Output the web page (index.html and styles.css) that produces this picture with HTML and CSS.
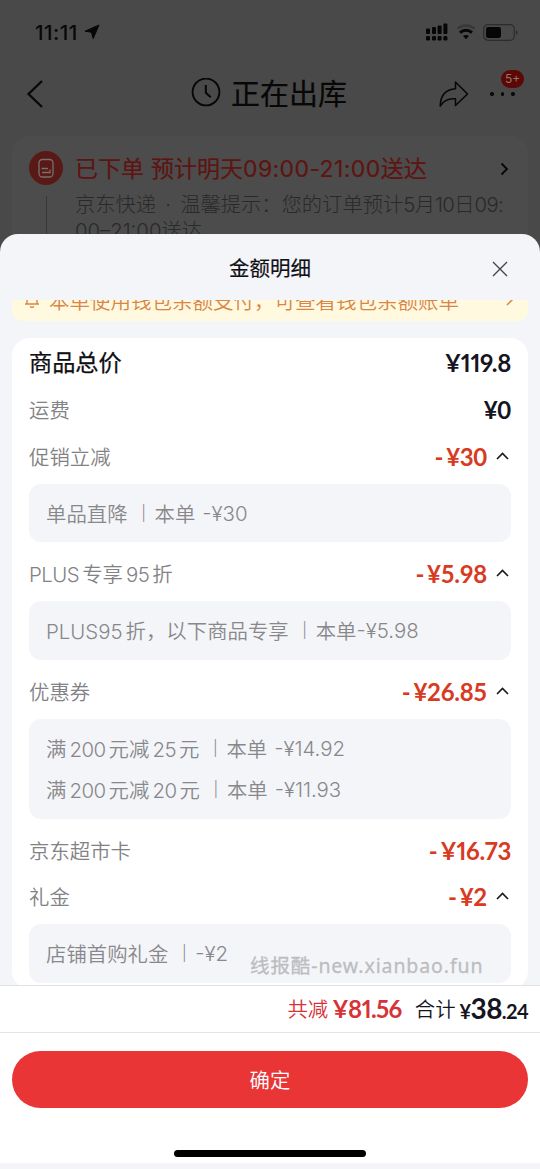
FILE: index.html
```html
<!DOCTYPE html>
<html lang="zh-CN">
<head>
<meta charset="utf-8">
<title>金额明细</title>
<link rel="stylesheet" href="styles.css">
</head>
<body>
<div class="phone">
  <div class="page">
    <div class="status">
      <span class="clock">11:11</span>
      <svg class="loc" width="16" height="16" viewBox="0 0 16 16"><path d="M15 1 1 7.2 7.4 8.2 9.2 14.6Z" fill="#070707" stroke="#070707" stroke-linejoin="round"/></svg>
      <svg class="signal" width="24" height="18" viewBox="0 0 24 18" fill="#070707"><rect x="1" y="5.5" width="4" height="5.5" rx="1"/><rect x="7" y="4" width="4" height="7" rx="1"/><rect x="12.6" y="2.5" width="4" height="8.5" rx="1"/><rect x="18.4" y="0.5" width="4" height="10.5" rx="1"/><rect x="1" y="13" width="4" height="4.5" rx="1.3"/><rect x="7" y="13" width="4" height="4.5" rx="1.3"/><rect x="12.6" y="13" width="4" height="4.5" rx="1.3"/><rect x="18.4" y="13" width="4" height="4.5" rx="1.3"/></svg>
      <svg class="wifi" width="20" height="16" viewBox="0 0 20 16" fill="none"><path d="M1.5 4.6C6.5.4 13.5.4 18.5 4.6" stroke="#383838" stroke-width="2.6"/><path d="M4 8.6C7.4 5.5 12.6 5.5 16 8.6" stroke="#070707" stroke-width="3"/><path d="M7 12Q10 9.8 13 12L10 15.3Z" fill="#070707"/></svg>
      <svg class="battery" width="35" height="17" viewBox="0 0 35 17"><rect x=".7" y=".7" width="30.6" height="15.6" rx="4.3" fill="none" stroke="#2c2c2c" stroke-width="1.2"/><rect x="3" y="3" width="15" height="11" rx="2.3" fill="#060606"/><path d="M33 6V11Q34.5 10 34.5 8.5T33 6" fill="#2a2a2a"/></svg>
    </div>
    <div class="nav">
      <svg class="back" width="18" height="30" viewBox="0 0 18 30"><path d="M16 2 2.5 15 16 28" fill="none" stroke="#080808" stroke-width="2.3"/></svg>
      <svg class="time" width="30" height="30" viewBox="0 0 30 30" fill="none" stroke="#070707"><circle cx="15" cy="14" r="13.4" stroke-width="1.9"/><path d="M14.8 7V14.8L19.8 19.3" stroke-width="2"/></svg>
      <h1>正在出库</h1>
      <svg class="share" width="32" height="28" viewBox="0 0 32 28"><path d="M17.5 2 29.5 14 17.5 25.5V18.8C10 18 5.5 20.5 2.2 26 2.5 15 8 9.5 17.5 8.8Z" fill="none" stroke="#070707" stroke-width="1.5" stroke-linejoin="round"/></svg>
      <div class="more"><i></i><i></i><i></i><b>5+</b></div>
    </div>
    <div class="order">
      <div class="rail">
        <svg width="34" height="34" viewBox="0 0 34 34"><circle cx="17" cy="17" r="17" fill="#591917"/><rect x="10" y="8.5" width="14" height="17.5" rx="3.5" fill="none" stroke="#77706f" stroke-width="1.3"/><path d="M12.5 17.5H19M13 21.5H21V18.5" fill="none" stroke="#77706f" stroke-width="1.3"/></svg>
        <span></span>
      </div>
      <div class="info">
        <div class="state"><span>已下单</span><span>预计明天<em>09:00-21:00</em>送达</span>
          <svg width="9" height="14" viewBox="0 0 9 14"><path d="M1.5 1.5 7 7 1.5 12.5" fill="none" stroke="#060606" stroke-width="1.8"/></svg></div>
        <p><span class="carrier">京东快递</span><span class="dot">·</span><span>温馨提示：您的订单预计<em>5</em>月<em>10</em>日<em>09:</em></span></p>
        <p>00–21:00送达</p>
      </div>
    </div>
  </div>

  <section class="sheet">
    <header><h2>金额明细</h2>
      <svg class="close" width="16" height="16" viewBox="0 0 16 16"><path d="M1 1 15 15M15 1 1 15" stroke="#464649" stroke-width="1.4"/></svg>
    </header>
    <div class="scroll">
      <div class="notice">
        <svg width="16" height="22" viewBox="0 0 16 22" fill="none" stroke="#d88545" stroke-width="1.4"><path d="M1 15H15M3 15V9Q3 4 8 4T13 9V15M6 17.5Q8 19 10 17.5"/></svg>
        <span>本单使用钱包余额支付，可查看钱包余额账单</span>
        <svg class="go" width="8" height="14" viewBox="0 0 8 14"><path d="M1 1 7 7 1 13" fill="none" stroke="#d88545" stroke-width="1.5"/></svg>
      </div>
      <div class="card">
        <div class="row total"><span>商品总价</span><b class="pn">¥119.8</b></div>
        <div class="row"><span>运费</span><b>¥0</b></div>
        <div class="row cut"><span>促销立减</span><b><i>-</i>¥30</b><svg class="up" viewBox="0 0 13 8"><path d="M1 7 6.5 1.5 12 7"/></svg></div>
        <div class="box"><p><span>单品直降</span><i class="bar">|</i><span>本单</span><em class="sp">-¥30</em></p></div>
        <div class="row cut"><span class="mix"><em>PLUS</em>专享<em>95</em>折</span><b><i>-</i>¥5.98</b><svg class="up" viewBox="0 0 13 8"><path d="M1 7 6.5 1.5 12 7"/></svg></div>
        <div class="box tall"><p><span class="mix wide"><em>PLUS95</em>折，以下商品专享</span><i class="bar">|</i><span>本单</span><em>-¥5.98</em></p></div>
        <div class="row cut"><span>优惠券</span><b><i>-</i>¥26.85</b><svg class="up" viewBox="0 0 13 8"><path d="M1 7 6.5 1.5 12 7"/></svg></div>
        <div class="box double">
          <p><span class="mix">满<em class="n">200</em>元减<em class="n">25</em>元</span><i class="bar">|</i><span>本单</span><em class="sp">-¥14.92</em></p>
          <p><span class="mix">满<em class="n">200</em>元减<em class="n">20</em>元</span><i class="bar">|</i><span>本单</span><em class="sp">-¥11.93</em></p>
        </div>
        <div class="row cut"><span>京东超市卡</span><b class="pn"><i>-</i>¥16.73</b></div>
        <div class="row cut last"><span>礼金</span><b><i>-</i>¥2</b><svg class="up" viewBox="0 0 13 8"><path d="M1 7 6.5 1.5 12 7"/></svg></div>
        <div class="box tall"><p><span>店铺首购礼金</span><i class="bar">|</i><em>-¥2</em></p></div>
      </div>
    </div>
    <div class="sum"><span class="off">共减</span><b class="off pn">¥81.56</b><span class="all">合计</span><b class="pay"><small>¥</small>38<small>.24</small></b></div>
    <div class="action"><button>确定</button><div class="home"></div></div>
    <div class="mark">线报酷-new.xianbao.fun</div>
  </section>
</div>
</body>
</html>
```
FILE: styles.css
```css
* { box-sizing: border-box; margin: 0; padding: 0; }
em, i { font-style: normal; }
svg { display: block; flex: none; }
body { font-family: "Inter", "Noto Sans CJK SC", sans-serif; }
.phone { position: relative; width: 540px; height: 1169px; overflow: hidden; background: #494949; }

.status { display: flex; align-items: center; height: 64px; padding: 0 22px 0 35px; }
.clock { font-size: 20.5px; font-weight: 550; color: #070707; letter-spacing: 0.5px; }
.loc { margin-left: 6px; }
.signal { margin-left: auto; }
.wifi { margin-left: 7px; }
.battery { margin-left: 7px; }

.nav { display: flex; align-items: center; height: 60px; padding: 0 24px 0 26px; }
.time { margin-left: 147px; margin-top: -2px; }
.nav h1 { margin-left: 10px; margin-top: -4px; font: 400 29px/40px "Noto Sans CJK SC", sans-serif; color: #070707; -webkit-text-stroke: 0.2px #070707; }
.share { margin-left: auto; }
.more { position: relative; display: flex; gap: 7px; width: 26px; margin-left: 20px; }
.more i { width: 3.5px; height: 3.5px; border-radius: 50%; background: #080808; }
.more b { position: absolute; left: 11px; top: -22px; width: 23px; height: 18px; border-radius: 9px; background: #5c0906; color: #8d7775; font-size: 12px; font-weight: 400; line-height: 18px; text-align: center; }

.order { display: flex; margin: 12px 12px 0; padding: 15px 0 0 17px; height: 150px; border-radius: 16px; background: #4c4c4c; }
.rail { width: 34px; }
.rail span { display: block; width: 1px; height: 60px; margin: 11px auto 0; background: #393939; }
.info { flex: 1; padding-left: 12px; }
.state { display: flex; align-items: center; height: 34px; gap: 7px; padding-top: 1px; font: 400 23px/34px "Inter", "Noto Sans CJK SC", sans-serif; color: #5e1411; -webkit-text-stroke: 0.2px #5e1411; white-space: nowrap; }
.state em { letter-spacing: 0.4px; }
.state svg { margin-left: auto; margin-right: 19px; }
.info p { display: flex; height: 26px; font-size: 20.3px; line-height: 26px; color: #292929; white-space: nowrap; font-weight: 300; }
.info p em { letter-spacing: -0.6px; }
.info .state + p { margin-top: 7px; }
.dot { width: 24px; text-align: center; }

.sheet { position: absolute; left: 0; top: 234px; width: 540px; height: 935px; display: flex; flex-direction: column; border-radius: 18px 18px 0 0; background: #f4f5f9; overflow: hidden; }
header { display: grid; grid-template-columns: 48px 1fr 48px; align-items: center; height: 66px; padding-top: 3px; }
h2 { grid-column: 2; margin-top: -3px; text-align: center; font: 400 20.5px/30px "Noto Sans CJK SC", sans-serif; color: #101014; -webkit-text-stroke: 0.2px #101014; }
.scroll { height: 685px; padding: 0 12px; overflow: hidden; }
.notice { display: flex; align-items: center; height: 42px; margin-top: -21px; padding: 0 14px 0 12px; border-radius: 10px; background: #fff9df; color: #d88545; font-size: 20.5px; }
.notice span { margin: -1px 0 0 9px; font-family: "Noto Sans CJK SC", sans-serif; font-weight: 350; line-height: 30px; }
.go { margin-left: auto; margin-top: -2px; }
.card { height: 651px; margin-top: 17px; padding: 2px 17px 0; border-radius: 18px; background: #fff; }
.row { display: flex; align-items: center; height: 47px; font-size: 20.4px; font-weight: 350; color: #828284; }
.row > span { margin-top: -2px; }
.row b { display: flex; margin-left: auto; font: 700 24px/30px "Lato", sans-serif; color: #15151f; letter-spacing: -0.3px; }
.row .pn, .sum .pn { font-variant-numeric: proportional-nums; }
.row b i { margin-right: 3px; }
.row.total { height: 46px; }
.row.total span { margin-top: -4px; font-size: 23.2px; font-weight: 400; color: #101014; -webkit-text-stroke: 0.25px #101014; }
.row.cut { height: 48px; }
.row.cut b { color: #d83a22; }
.row.cut.last { height: 46px; padding-bottom: 2px; }
.up { width: 13px; height: 8px; margin-left: 9px; margin-right: 2px; margin-top: -3px; fill: none; stroke: #18181c; stroke-width: 1.6; }
.box { height: 58px; margin: 3px 0 8px; padding: 8px 17px; border-radius: 12px; background: #f4f5f9; }
.box.tall { height: 59px; }
.box.double { height: 100px; }
.box p { display: flex; height: 41px; align-items: center; white-space: nowrap; font-size: 20.4px; font-weight: 350; color: #88888b; }
.bar { width: 20px; margin-left: 6px; text-align: center; font-size: 15px; margin-right: 1px; }
.box p > em { margin-top: 1px; }
.box .sp { margin-left: 7px; }
.mix em { margin: 0 3px; letter-spacing: -0.5px; }
.mix em:first-child { margin-left: 0; }
.mix.wide em { letter-spacing: 0; }
.mix em.n { margin-left: 3px; }

.sum { display: flex; align-items: center; justify-content: flex-end; height: 48px; padding-right: 12px; border: solid #e3e3e6; border-width: 1px 0; background: #fff; font-size: 20.4px; white-space: nowrap; }
.sum span { margin-top: -2px; font-weight: 350; }
.sum b { font: 700 24px/34px "Lato", sans-serif; letter-spacing: -0.6px; }
.off { color: #d73337; }
.sum b.off { margin-left: 4px; }
.sum .all { margin-left: 13px; color: #15151f; }
.sum .pay { margin-left: 4px; font-size: 28px; color: #15151f; }
.pay small { font-size: 20px; }
.action { height: 130px; padding: 18px 12px 0; background: #fff; }
button { display: block; width: 516px; height: 57px; border: 0; border-radius: 29px; background: #e93535; color: #fff; font: 350 20.4px/57px "Noto Sans CJK SC", sans-serif; }
.home { width: 192px; height: 7px; margin: 42px auto 0; border-radius: 4px; background: #000; }
.mark { position: absolute; left: 250px; top: 718px; font: 400 19.5px/28px "Noto Sans", "Noto Sans CJK SC", sans-serif; letter-spacing: 0.9px; color: #bcbdc0; white-space: nowrap; -webkit-text-stroke: 0.3px #bcbdc0; }
```
